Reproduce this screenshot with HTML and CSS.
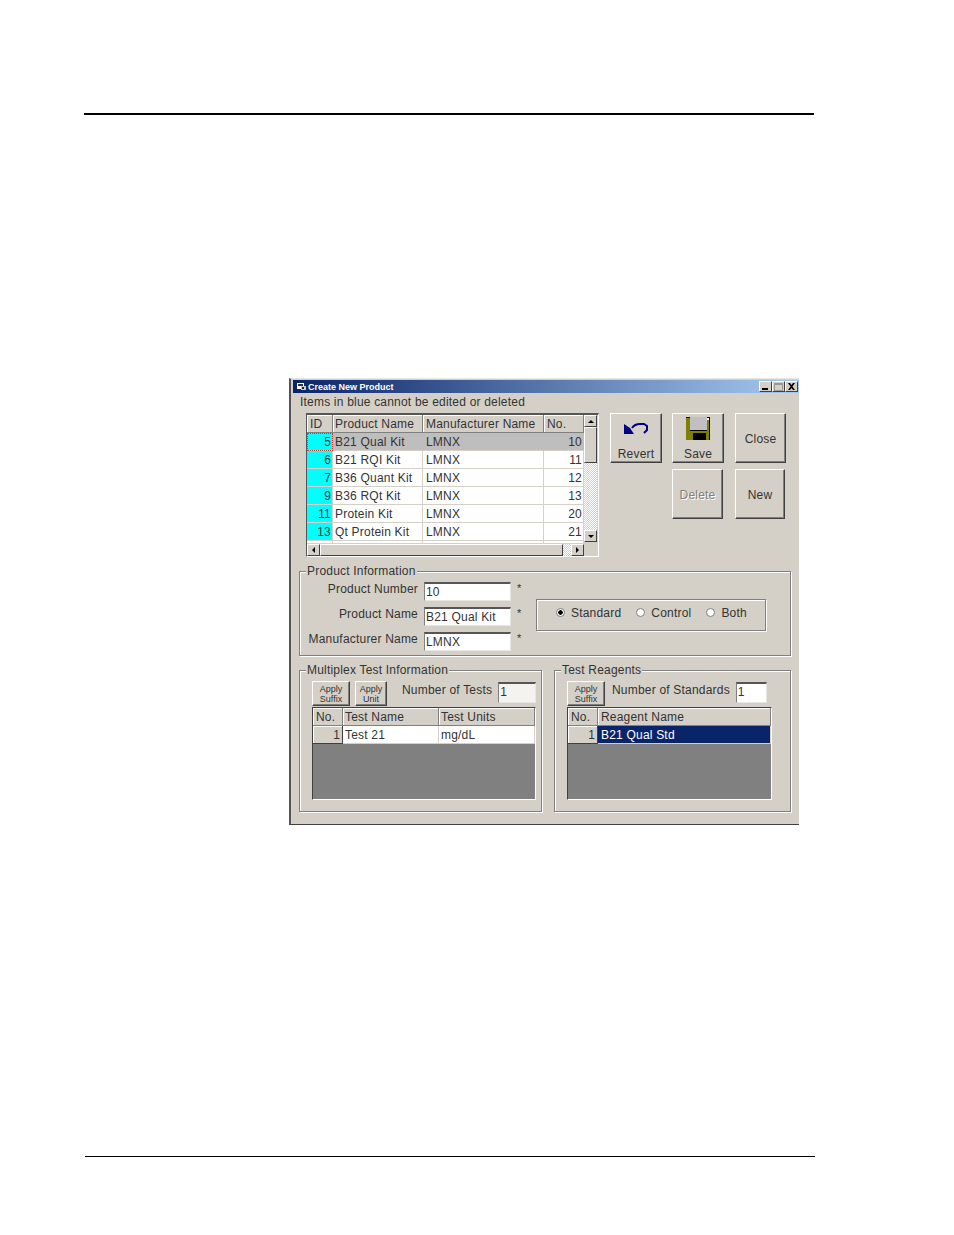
FILE: index.html
```html
<!DOCTYPE html>
<html lang="en">
<head>
  <meta charset="UTF-8">
  <meta name="viewport" content="width=device-width, initial-scale=1.0">
  <title>Create New Product</title>
  <link rel="stylesheet" href="styles.css">
</head>
<body>
  <div class="rule rule-top"></div>

  <!-- Dialog screenshot -->
  <div class="window">
    <div class="titlebar">
      <svg class="app-icon" width="10" height="9" viewBox="0 0 10 9">
        <rect x="0" y="1" width="7" height="6" fill="#fff"/>
        <rect x="1" y="2" width="5" height="2" fill="#333"/>
        <rect x="4" y="4" width="5" height="4" fill="#ccc"/>
        <rect x="5" y="5" width="2" height="2" fill="#222"/>
      </svg>
      <span class="title-text">Create New Product</span>
      <div class="title-buttons">
        <span class="cap-btn"><i class="cap-min"></i></span>
        <span class="cap-btn"><i class="cap-max"></i></span>
        <span class="cap-btn">
          <svg width="9" height="7" viewBox="0 0 9 7"><path d="M1 0h2l1.500 2L6 0h2L5.500 3.500 8 7H6L4.500 5 3 7H1l2.500-3.500z" fill="#000"/></svg>
        </span>
      </div>
    </div>

    <div class="notice">Items in blue cannot be edited or deleted</div>

    <div class="top-row">
      <!-- Product list -->
      <div class="list-frame">
        <div class="list-table-wrap">
          <table class="grid list-table">
            <colgroup><col class="c-id"><col class="c-name"><col class="c-mfr"><col class="c-no"></colgroup>
            <tr><th>ID</th><th>Product Name</th><th>Manufacturer Name</th><th>No.</th></tr>
            <tr class="selected"><td class="id focus">5</td><td>B21 Qual Kit</td><td>LMNX</td><td class="num">10</td></tr>
            <tr><td class="id">6</td><td>B21 RQI Kit</td><td>LMNX</td><td class="num">11</td></tr>
            <tr><td class="id">7</td><td>B36 Quant Kit</td><td>LMNX</td><td class="num">12</td></tr>
            <tr><td class="id">9</td><td>B36 RQt Kit</td><td>LMNX</td><td class="num">13</td></tr>
            <tr><td class="id">11</td><td>Protein Kit</td><td>LMNX</td><td class="num">20</td></tr>
            <tr><td class="id">13</td><td>Qt Protein Kit</td><td>LMNX</td><td class="num">21</td></tr>
            <tr><td></td><td></td><td></td><td></td></tr>
          </table>
        </div>
        <div class="vscroll">
          <span class="sb-btn"><i class="arrow arrow-up"></i></span>
          <span class="sb-thumb-v"></span>
          <span class="sb-track"></span>
          <span class="sb-btn"><i class="arrow arrow-down"></i></span>
        </div>
        <div class="hscroll">
          <span class="sb-btn"><i class="arrow arrow-left"></i></span>
          <span class="sb-thumb-h"></span>
          <span class="sb-track"></span>
          <span class="sb-btn"><i class="arrow arrow-right"></i></span>
        </div>
      </div>

      <!-- Action buttons -->
      <div class="actions">
        <button class="action">
          <svg class="action-icon" width="24" height="23" viewBox="0 0 24 23">
            <path d="M8 11c2-3 4-4 8-4h4l3 2v4l-3 3" fill="none" stroke="#000080" stroke-width="2"/>
            <path d="M0 7l3 2 3 2 4 6H0z" fill="#000080"/>
          </svg>
          <span>Revert</span>
        </button>
        <button class="action">
          <svg class="action-icon" width="24" height="23" viewBox="0 0 24 23">
            <rect x="0" y="0" width="24" height="23" fill="#808000"/>
            <rect x="0" y="0" width="24" height="1" fill="#000"/>
            <rect x="23" y="0" width="1" height="23" fill="#000"/>
            <rect x="4" y="0" width="17" height="13" fill="#c0c0c0"/>
            <rect x="4" y="13" width="17" height="1" fill="#000"/>
            <rect x="21" y="1" width="2" height="2" fill="#fff"/>
            <rect x="7" y="16" width="13" height="7" fill="#000"/>
          </svg>
          <span>Save</span>
        </button>
        <button class="action action-short action-close"><span>Close</span></button>
        <button class="action action-short action-delete" disabled><span>Delete</span></button>
        <button class="action action-short action-new"><span>New</span></button>
      </div>
    </div>

    <!-- Product information -->
    <div class="group info-group">
      <span class="group-title">Product Information</span>
      <div class="info-form">
        <label>Product Number</label><div class="field">10</div><span class="req">*</span>
        <label>Product Name</label><div class="field">B21 Qual Kit</div><span class="req">*</span>
        <label>Manufacturer Name</label><div class="field">LMNX</div><span class="req">*</span>
      </div>
      <div class="radio-box">
        <span class="radio checked"></span><span class="radio-label">Standard</span>
        <span class="radio"></span><span class="radio-label">Control</span>
        <span class="radio"></span><span class="radio-label">Both</span>
      </div>
    </div>

    <div class="bottom-row">
      <!-- Multiplex tests -->
      <div class="group test-group">
        <span class="group-title">Multiplex Test Information</span>
        <div class="tool-row">
          <button class="mini">Apply<br>Suffix</button>
          <button class="mini mini-unit">Apply<br>Unit</button>
          <span class="count-label tests-label">Number of Tests</span>
          <div class="field count-field tests-field">1</div>
        </div>
        <div class="sub-grid test-grid">
          <table class="grid">
            <colgroup><col class="c-sub-no"><col class="c-test"><col></colgroup>
            <tr><th>No.</th><th>Test Name</th><th>Test Units</th></tr>
            <tr><td class="row-head">1</td><td>Test 21</td><td>mg/dL</td></tr>
          </table>
        </div>
      </div>

      <!-- Reagents -->
      <div class="group reagent-group">
        <span class="group-title">Test Reagents</span>
        <div class="tool-row">
          <button class="mini">Apply<br>Suffix</button>
          <span class="count-label standards-label">Number of Standards</span>
          <div class="field count-field standards-field">1</div>
        </div>
        <div class="sub-grid reagent-grid">
          <table class="grid">
            <colgroup><col class="c-sub-no"><col></colgroup>
            <tr><th>No.</th><th>Reagent Name</th></tr>
            <tr><td class="row-head">1</td><td class="picked">B21 Qual Std</td></tr>
          </table>
        </div>
      </div>
    </div>
  </div>

  <div class="rule rule-bottom"></div>
</body>
</html>
```

FILE: styles.css
```css
* {
  box-sizing: border-box;
}

body {
  margin: 0;
  height: 1235px;
  overflow: hidden;
  background: #fff;
  font-family: "Liberation Sans", Arial, sans-serif;
  font-size: 12px;
  letter-spacing: 0.2px;
  color: #333;
}

/* Page rules */
.rule {
  background: #000;
}

.rule-top {
  width: 730px;
  height: 2px;
  margin: 113px 0 0 84px;
}

.rule-bottom {
  width: 730px;
  height: 1px;
  margin: 331px 0 0 85px;
}

/* Dialog window */
.window {
  width: 510px;
  height: 447px;
  margin: 263px 0 0 289px;
  padding: 1px 0 0 2px;
  background: #d4d0c8;
  border-left: 2px solid #555;
  border-top: 1px solid #e8e6e0;
  border-bottom: 1px solid #404040;
}

.titlebar {
  display: flex;
  align-items: center;
  height: 13px;
  padding: 0 1px 0 4px;
  background: linear-gradient(to right, #0a246a, #a6caf0);
  color: #fff;
}

.app-icon {
  margin-right: 1px;
}

.title-text {
  font: bold 9px "Liberation Sans", Arial, sans-serif;
  letter-spacing: 0;
}

.title-buttons {
  display: flex;
  margin-left: auto;
}

.cap-btn {
  display: flex;
  align-items: center;
  justify-content: center;
  width: 13px;
  height: 11px;
  background: #d4d0c8;
  border: 1px solid;
  border-color: #fff #404040 #404040 #fff;
}

.cap-min {
  width: 6px;
  height: 2px;
  margin-top: 5px;
  margin-right: 2px;
  background: #000;
}

.cap-max {
  width: 9px;
  height: 8px;
  border: 1px solid #999;
  border-top-width: 2px;
}

.notice {
  height: 14px;
  margin: 2px 0 0 7px;
  line-height: 14px;
}

/* Top row: product list and buttons */
.top-row {
  display: flex;
  margin: 4px 0 0 13px;
}

.list-frame {
  display: grid;
  grid-template-columns: 277px 13px;
  grid-template-rows: 129px 12px;
  width: 293px;
  height: 144px;
  border: 1px solid;
  border-color: #555 #fff #fff #555;
  border-top-width: 2px;
}

.list-table-wrap {
  overflow: hidden;
}

.grid {
  width: 100%;
  table-layout: fixed;
  border-collapse: separate;
  border-spacing: 0;
}

.grid th,
.grid td {
  height: 18px;
  padding: 0 3px;
  overflow: hidden;
  white-space: nowrap;
  font-weight: normal;
  text-align: left;
  line-height: 16px;
  border-right: 1px solid #d4d0c8;
  border-bottom: 1px solid #d4d0c8;
  background: #fff;
}

.grid th {
  background: #d4d0c8;
  border-right-color: #808080;
  border-bottom-color: #808080;
  box-shadow: inset 1px 1px 0 #fff;
}

.c-id { width: 26px; }
.c-name { width: 90px; }
.c-mfr { width: 121px; }
.c-no { width: 40px; }

.grid td.id {
  background: #00ffff;
  text-align: right;
  padding-right: 1px;
}

.grid td.focus {
  outline: 1px dotted #e03020;
  outline-offset: -1px;
}

.selected td {
  background: #bebebe;
  border-right-color: #bebebe;
}

.grid td.num {
  text-align: right;
  padding-right: 1px;
}

.list-table th:nth-child(2),
.list-table td:nth-child(2),
.test-grid th:nth-child(n+2),
.test-grid td:nth-child(n+2) {
  padding-left: 2px;
}

.list-table tr:last-child td {
  height: 3px;
}

/* Scrollbars */
.vscroll {
  display: flex;
  flex-direction: column;
  height: 127px;
}

.hscroll {
  grid-column: 1;
  display: flex;
}

.sb-btn {
  display: flex;
  flex: none;
  align-items: center;
  justify-content: center;
  width: 13px;
  height: 12px;
  background: #d4d0c8;
  border: 1px solid;
  border-color: #fff #404040 #404040 #fff;
}

.sb-thumb-v {
  flex: none;
  height: 36px;
  background: #d4d0c8;
  border: 1px solid;
  border-color: #fff #404040 #404040 #fff;
}

.sb-thumb-h {
  width: 243px;
  background: #d4d0c8;
  border: 1px solid;
  border-color: #fff #404040 #404040 #fff;
}

.sb-track {
  flex: 1;
  background: repeating-conic-gradient(#fff 0 25%, #d4d0c8 0 50%) 0 0 / 2px 2px;
}

.arrow {
  width: 0;
  height: 0;
  border: 3px solid transparent;
}

.arrow-up { border-bottom-color: #000; border-top-width: 0; }
.arrow-down { border-top-color: #000; border-bottom-width: 0; }
.arrow-left { border-right-color: #000; border-left-width: 0; }
.arrow-right { border-left-color: #000; border-right-width: 0; }

/* Action buttons */
.actions {
  display: grid;
  grid-template-columns: 52px 53px 51px;
  grid-auto-rows: min-content;
  column-gap: 10px;
  row-gap: 6px;
  margin-left: 11px;
}

button {
  font-family: inherit;
  letter-spacing: inherit;
  color: inherit;
  padding: 0;
  background: #d4d0c8;
  border: 1px solid;
  border-color: #fff #404040 #404040 #fff;
  box-shadow: inset -1px -1px 0 #808080;
}

.action {
  display: flex;
  flex-direction: column;
  align-items: center;
  justify-content: flex-end;
  width: 52px;
  height: 50px;
  font-size: 12px;
  padding-bottom: 1px;
}

.action-icon {
  display: block;
  margin-bottom: 7px;
}

.action-short {
  justify-content: center;
  padding: 2px 0 0;
}

.action-close {
  width: 51px;
}

.action-delete {
  grid-column: 2;
  width: 51px;
}

.action-new {
  width: 50px;
}

.action:disabled {
  color: #808080;
  text-shadow: 1px 1px 0 #fff;
}

/* Group boxes */
.group {
  position: relative;
  border: 1px solid #808080;
  box-shadow: 1px 1px 0 #fff, inset 1px 1px 0 #fff;
}

.group-title {
  position: absolute;
  top: -8px;
  left: 6px;
  padding: 0 1px;
  line-height: 14px;
  background: #d4d0c8;
}

.info-group {
  display: flex;
  align-items: flex-start;
  width: 492px;
  height: 85px;
  margin: 14px 0 0 6px;
  padding-top: 10px;
}

.info-form {
  display: grid;
  grid-template-columns: 118px 87px 19px;
  grid-auto-rows: 19px;
  column-gap: 6px;
  row-gap: 6px;
}

.info-form label {
  text-align: right;
  line-height: 15px;
  white-space: nowrap;
}

.field {
  height: 19px;
  padding-left: 1px;
  line-height: 16px;
  white-space: nowrap;
  background: #fff;
  border: 1px solid;
  border-color: #555 #e8e6e0 #e8e6e0 #808080;
  border-top-width: 2px;
}

.req {
  line-height: 12px;
  font-size: 11px;
}

.radio-box {
  display: flex;
  align-items: center;
  width: 230px;
  height: 32px;
  margin-top: 17px;
  padding: 0 0 5px 19px;
  border: 1px solid #808080;
  box-shadow: 1px 1px 0 #fff, inset 1px 1px 0 #fff;
}

.radio {
  width: 9px;
  height: 9px;
  margin-right: 6px;
  border-radius: 50%;
  background: #fff;
  border: 1px solid #808080;
}

.radio.checked {
  background: radial-gradient(circle, #000 0 2px, #fff 2.500px);
}

.radio-label {
  margin-right: 15px;
}

/* Bottom row groups */
.bottom-row {
  display: flex;
  gap: 12px;
  margin: 14px 0 0 6px;
}

.test-group,
.reagent-group {
  height: 142px;
  padding: 10px 0 0 12px;
}

.test-group {
  width: 243px;
}

.reagent-group {
  width: 237px;
}

.tool-row {
  display: flex;
  align-items: flex-start;
  height: 26px;
}

.mini {
  width: 38px;
  height: 25px;
  font-size: 9px;
  line-height: 10px;
  letter-spacing: 0;
}

.mini-unit {
  width: 32px;
  margin-left: 5px;
}

.count-label {
  line-height: 16px;
  margin-top: 1px;
  white-space: nowrap;
}

.tests-label {
  margin-left: 15px;
}

.standards-label {
  margin-left: 7px;
}

.count-field {
  height: 21px;
  margin: 1px 0 0 6px;
}

.tests-field {
  width: 38px;
  background: #f4f3f0;
}

.standards-field {
  width: 31px;
}

.sub-grid {
  width: 224px;
  height: 93px;
  background: #808080;
  border: 1px solid;
  border-color: #404040 #fff #fff #404040;
}

.reagent-grid {
  width: 205px;
}

.c-sub-no { width: 30px; }
.c-test { width: 96px; }

.grid td.row-head {
  background: #d4d0c8;
  text-align: right;
  padding-right: 2px;
  border-right-color: #404040;
  border-bottom-color: #404040;
  box-shadow: inset 1px 1px 0 #fff;
}

.grid td.picked {
  background: #0a246a;
  color: #fff;
}
```
